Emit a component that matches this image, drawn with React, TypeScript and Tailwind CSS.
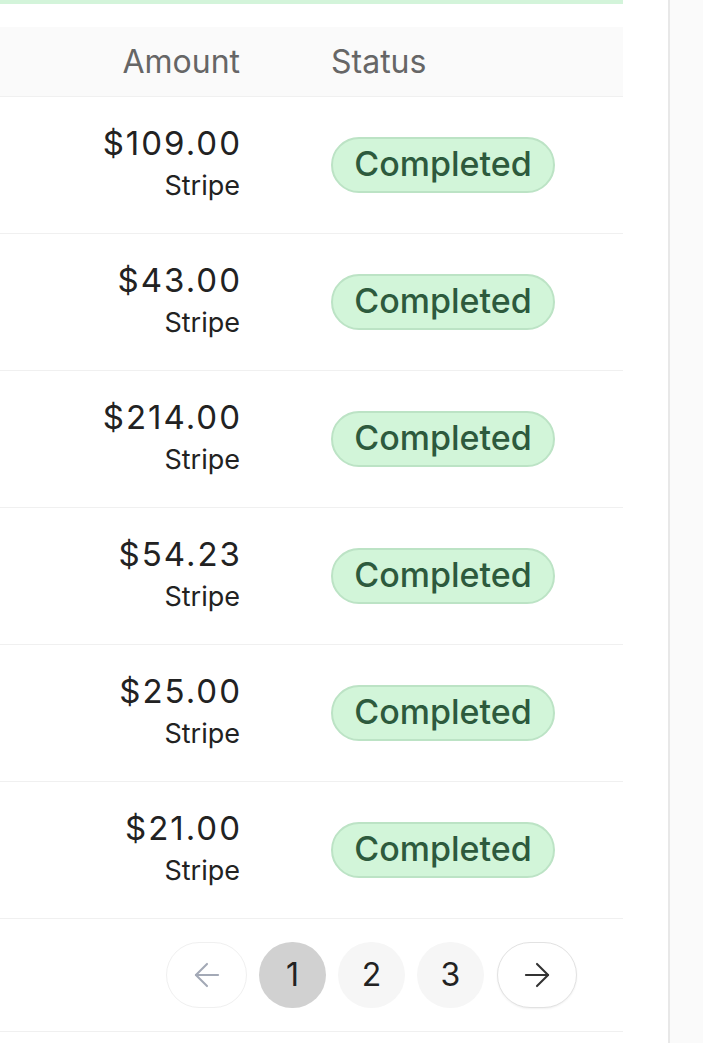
import { ArrowLeft, ArrowRight } from 'lucide-react';

const rows = [
  { amount: '$109.00', method: 'Stripe' },
  { amount: '$43.00', method: 'Stripe' },
  { amount: '$214.00', method: 'Stripe' },
  { amount: '$54.23', method: 'Stripe' },
  { amount: '$25.00', method: 'Stripe' },
  { amount: '$21.00', method: 'Stripe' },
];

export default function App() {
  return (
    <div className="flex min-h-[1043px] bg-white" style={{ fontFamily: 'Inter, "Noto Sans", sans-serif' }}>
      <div className="w-[668px] shrink-0">
        <div className="w-[623px]">
          <div className="h-[4px] bg-[#d3f4da]" />
          <div className="mt-[23px] grid h-[70px] grid-cols-[240px_1fr] items-center border-b border-[#f0f0f0] bg-[#fafafa] text-[32px] text-[#666666]">
            <div className="text-right">Amount</div>
            <div className="pl-[91px]">Status</div>
          </div>
          {rows.map((r, i) => (
            <div key={i} className="grid h-[137px] grid-cols-[240px_1fr] items-center border-b border-[#f0f0f0]">
              <div className="pb-[4px] text-right">
                <div className="mr-[-2px] text-[33px] leading-[36px] tracking-[2px] text-[#222222]">{r.amount}</div>
                <div className="mt-[10px] text-[27px] leading-[30px] text-[#222222]">{r.method}</div>
              </div>
              <div className="pl-[91px]">
                <span className="inline-flex h-[56px] w-[224px] items-center justify-center rounded-full border-2 border-[#bce3c5] bg-[#d2f5d9] pb-[3px] text-[34px] font-medium text-[#2d5a3d]">
                  Completed
                </span>
              </div>
            </div>
          ))}
          <div className="flex h-[113px] items-center justify-end gap-[12px] border-b border-[#f0f0f0] pr-[46px]">
            <button className="flex h-[66px] w-[81px] items-center justify-center rounded-full border border-[#f0f0f0] bg-white text-[#a3a9b6]">
              <ArrowLeft size={38} strokeWidth={1.3} />
            </button>
            <button className="flex h-[66px] w-[67px] items-center justify-center rounded-full bg-[#d1d1d1] text-[32px] text-[#222222]">1</button>
            <button className="flex h-[66px] w-[67px] items-center justify-center rounded-full bg-[#f6f6f6] text-[32px] text-[#222222]">2</button>
            <button className="flex h-[66px] w-[67px] items-center justify-center rounded-full bg-[#f6f6f6] text-[32px] text-[#222222]">3</button>
            <button className="ml-[1px] flex h-[66px] w-[80px] items-center justify-center rounded-full border border-[#e2e2e2] bg-white text-[#333333] shadow-[0_1px_2px_rgba(0,0,0,0.06)]">
              <ArrowRight size={38} strokeWidth={1.3} />
            </button>
          </div>
        </div>
      </div>
      <div className="flex-1 border-l-2 border-[#e8e8e8] bg-[#fafafa]" />
    </div>
  );
}
